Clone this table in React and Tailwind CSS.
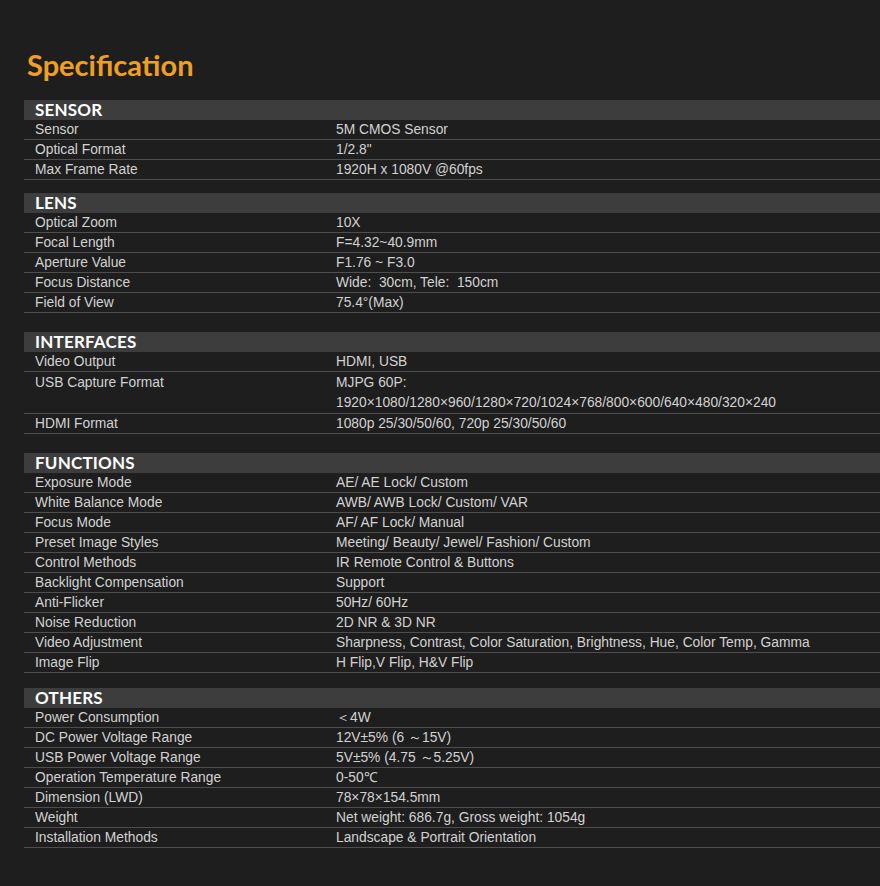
import React from "react";

const specs = [
  {
    title: "SENSOR",
    gap: "mt-0",
    rows: [
      ["Sensor", "5M CMOS Sensor"],
      ["Optical Format", '1/2.8"'],
      ["Max Frame Rate", "1920H x 1080V @60fps"],
    ],
  },
  {
    title: "LENS",
    gap: "mt-[13px]",
    rows: [
      ["Optical Zoom", "10X"],
      ["Focal Length", "F=4.32~40.9mm"],
      ["Aperture Value", "F1.76 ~ F3.0"],
      ["Focus Distance", "Wide:  30cm, Tele:  150cm"],
      ["Field of View", "75.4°(Max)"],
    ],
  },
  {
    title: "INTERFACES",
    gap: "mt-[19px]",
    rows: [
      ["Video Output", "HDMI, USB"],
      [
        "USB Capture Format",
        [
          "MJPG 60P:",
          "1920×1080/1280×960/1280×720/1024×768/800×600/640×480/320×240",
        ],
      ],
      ["HDMI Format", "1080p 25/30/50/60, 720p 25/30/50/60"],
    ],
  },
  {
    title: "FUNCTIONS",
    gap: "mt-[19px]",
    rows: [
      ["Exposure Mode", "AE/ AE Lock/ Custom"],
      ["White Balance Mode", "AWB/ AWB Lock/ Custom/ VAR"],
      ["Focus Mode", "AF/ AF Lock/ Manual"],
      ["Preset Image Styles", "Meeting/ Beauty/ Jewel/ Fashion/ Custom"],
      ["Control Methods", "IR Remote Control & Buttons"],
      ["Backlight Compensation", "Support"],
      ["Anti-Flicker", "50Hz/ 60Hz"],
      ["Noise Reduction", "2D NR & 3D NR"],
      [
        "Video Adjustment",
        "Sharpness, Contrast, Color Saturation, Brightness, Hue, Color Temp, Gamma",
      ],
      ["Image Flip", "H Flip,V Flip, H&V Flip"],
    ],
  },
  {
    title: "OTHERS",
    gap: "mt-[15px]",
    rows: [
      ["Power Consumption", "＜4W"],
      ["DC Power Voltage Range", "12V±5% (6 ～15V)"],
      ["USB Power Voltage Range", "5V±5% (4.75 ～5.25V)"],
      ["Operation Temperature Range", "0-50℃"],
      ["Dimension (LWD)", "78×78×154.5mm"],
      ["Weight", "Net weight: 686.7g, Gross weight: 1054g"],
      ["Installation Methods", "Landscape & Portrait Orientation"],
    ],
  },
];

const SpecRow = ({ label, value }) => {
  const multi = Array.isArray(value);
  const lines = multi ? value : [value];
  return (
    <div
      className={`flex border-b border-[#4e4e4e] pt-[1px] text-[13.8px] text-[#d2d2d2] ${
        multi ? "leading-[20px]" : "leading-[18px]"
      }`}
    >
      <div className="w-[312px] shrink-0 pl-[11px]">{label}</div>
      <div className="flex-1">
        {lines.map((l, i) => (
          <div key={i} className="whitespace-pre">
            {l}
          </div>
        ))}
      </div>
    </div>
  );
};

const App = () => {
  return (
    <div
      className="min-h-screen bg-[#1e1e1e] pl-[24px] pt-[45px] pb-[38px]"
      style={{ fontFamily: '"Liberation Sans", Arial, sans-serif' }}
    >
      <h1 className="pl-[3px] font-['Lato',sans-serif] text-[29px] font-bold leading-[40px] text-[#f0a020]">
        Specification
      </h1>
      <div className="mt-[15px] flex flex-col">
        {specs.map((s) => (
          <div key={s.title} className={s.gap}>
            <div className="flex h-[20px] items-center bg-[#3d3d3d] pl-[11px] font-['Lato',sans-serif] text-[17px] font-bold tracking-[0.2px] text-white">
              {s.title}
            </div>
            {s.rows.map(([label, value]) => (
              <SpecRow key={label} label={label} value={value} />
            ))}
          </div>
        ))}
      </div>
    </div>
  );
};

export default App;
